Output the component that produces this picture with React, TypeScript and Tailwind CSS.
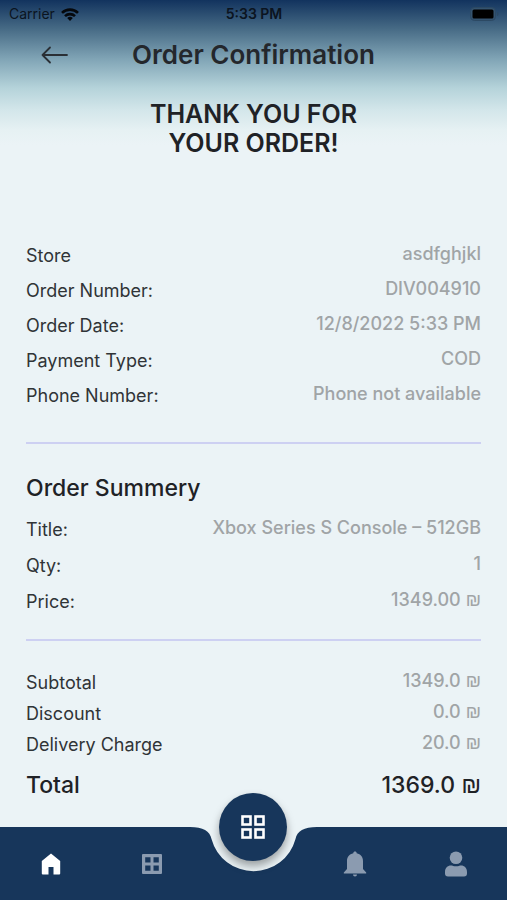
import React from "react";

type Item = { label: string; value: string; currency?: boolean };

const orderInfo: Item[] = [
  { label: "Store", value: "asdfghjkl" },
  { label: "Order Number:", value: "DIV004910" },
  { label: "Order Date:", value: "12/8/2022 5:33 PM" },
  { label: "Payment Type:", value: "COD" },
  { label: "Phone Number:", value: "Phone not available" },
];

const summary: Item[] = [
  { label: "Title:", value: "Xbox Series S Console – 512GB" },
  { label: "Qty:", value: "1" },
  { label: "Price:", value: "1349.00", currency: true },
];

const charges: Item[] = [
  { label: "Subtotal", value: "1349.0", currency: true },
  { label: "Discount", value: "0.0", currency: true },
  { label: "Delivery Charge", value: "20.0", currency: true },
];

function Shekel() {
  return <span className="font-['Liberation_Sans',sans-serif]"> ₪</span>;
}

function Rows({ items, className }: { items: Item[]; className: string }) {
  return (
    <dl className={`flex flex-col ${className}`}>
      {items.map((item) => (
        <div key={item.label} className="flex items-start justify-between text-lg">
          <dt className="leading-6 text-[#303437]">{item.label}</dt>
          <dd className="text-right font-medium leading-[19px] text-[#a0a4a6]">
            {item.value}
            {item.currency && <Shekel />}
          </dd>
        </div>
      ))}
    </dl>
  );
}

function StatusBar() {
  return (
    <div className="grid h-7 grid-cols-3 items-center pl-[9px] pr-2 text-sm text-[#0b1420]">
      <div className="flex items-center gap-1.5">
        <span>Carrier</span>
        <svg width="18" height="13" viewBox="0 0 18 13" fill="none" stroke="#05080c" strokeWidth="2.6">
          <path d="M1 4.9a11.4 11.4 0 0 1 16 0" />
          <path d="M4 8.1a7.2 7.2 0 0 1 10 0" />
          <path d="M9 13 6.2 10.1a4 4 0 0 1 5.6 0Z" fill="#05080c" stroke="none" />
        </svg>
      </div>
      <span className="text-center font-semibold">5:33 PM</span>
      <svg className="justify-self-end" width="29" height="14" viewBox="0 0 29 14">
        <rect x="0.5" y="0.5" width="25" height="13" rx="4" fill="#34536f" stroke="#2c4963" />
        <rect x="2.5" y="2.5" width="21" height="9" rx="1.5" fill="#000" />
        <path d="M27 5v4c2-.6 2-3.4 0-4Z" fill="#2c4963" />
      </svg>
    </div>
  );
}

function BottomNav() {
  return (
    <nav className="relative h-[73px]">
      {/* bar background, with the notch in the middle */}
      <div className="absolute inset-0 flex">
        <div className="flex-1 bg-[#17365b]" />
        <svg width="127" height="73" viewBox="0 0 127 73" fill="#17365b">
          <path d="M0 0C13 0 20 4 21.5 12A43.5 43.5 0 0 0 105.500 12C107 4 114 0 127 0V73H0Z" />
        </svg>
        <div className="flex-1 bg-[#17365b]" />
      </div>

      <div className="relative grid h-full grid-cols-5 justify-items-center text-[#8b9bb0]">
        <button aria-label="Home" className="text-white">
          <svg width="20" height="22" viewBox="0 0 20 22" fill="currentColor">
            <path d="M10 0.5 19.2 8V20.500a1 1 0 0 1-1 1H12.500V14H7.500V21.500H1.800a1 1 0 0 1-1-1V8Z" />
          </svg>
        </button>
        <button aria-label="Categories">
          <svg width="20" height="20" viewBox="0 0 20 20" fill="currentColor">
            <path
              fillRule="evenodd"
              d="M1 0H19a1 1 0 0 1 1 1V19a1 1 0 0 1-1 1H1a1 1 0 0 1-1-1V1a1 1 0 0 1 1-1ZM3.200 3.200V8.500H8.500V3.200ZM11.500 3.200V8.500H16.800V3.200ZM3.200 11.500V16.800H8.500V11.500ZM11.500 11.500V16.800H16.800V11.500Z"
            />
          </svg>
        </button>
        <button
          aria-label="Menu"
          className="-mt-[34px] flex size-[68px] items-center justify-center rounded-full bg-[#17365b] shadow-[0_5px_8px_rgba(0,0,0,0.35)]"
        >
          <svg width="24" height="24" viewBox="0 0 24 24" fill="none" stroke="#fff" strokeWidth="2.6">
            <rect x="1.5" y="1.5" width="8" height="8" />
            <rect x="14.5" y="1.5" width="8" height="8" />
            <rect x="1.5" y="14.5" width="8" height="8" />
            <rect x="14.5" y="14.5" width="8" height="8" />
          </svg>
        </button>
        <button aria-label="Notifications">
          <svg width="24" height="26" viewBox="0 0 24 26" fill="currentColor">
            <path d="M12 .5c1 0 1.700.7 1.700 1.700C17.700 3 20 6 20 10v8l3.200 3.500v1H.8v-1L4 18v-8c0-4 2.300-7 6.300-7.800C10.300 1.200 11 .5 12 .5ZM10 23.500h4a2 2 0 0 1-4 0Z" />
          </svg>
        </button>
        <button aria-label="Profile">
          <svg width="22" height="26" viewBox="0 0 22 26" fill="currentColor">
            <circle cx="11" cy="6.7" r="6.3" />
            <path d="M0 21c0-4 2.500-6.500 6-6.500 1.500 0 2.500.8 5 .8s3.500-.8 5-.8c3.500 0 6 2.500 6 6.500v1.500a3 3 0 0 1-3 3H3a3 3 0 0 1-3-3Z" />
          </svg>
        </button>
      </div>
    </nav>
  );
}

function App() {
  return (
    <div className="flex min-h-screen flex-col bg-[#ebf3f6] bg-[linear-gradient(180deg,#12335e_0px,#456984_28px,#82a6b7_60px,#b5d3da_88px,#d3e6ea_110px,#e6f1f3_130px,#ebf3f6_145px)] bg-no-repeat font-['Inter',sans-serif] text-[#1f2226]">
      <StatusBar />

      <header className="grid h-[54px] grid-cols-[1fr_auto_1fr] items-center px-[41px]">
        <button aria-label="Back" className="justify-self-start">
          <svg width="27" height="18" viewBox="0 0 27 18" fill="none" stroke="#2a2f35" strokeWidth="1.8" strokeLinecap="round" strokeLinejoin="round">
            <path d="M26 9H1.5M9 1.5 1.5 9 9 16.5" />
          </svg>
        </button>
        <h1 className="text-[26px] font-semibold leading-8 text-[#24272c]">Order Confirmation</h1>
      </header>

      <main className="flex flex-1 flex-col px-[26px]">
        <h2 className="mt-[18px] text-center text-[25px] font-semibold leading-[29px]">
          THANK YOU FOR
          <br />
          YOUR ORDER!
        </h2>

        <Rows items={orderInfo} className="mt-[86px] gap-[11px]" />
        <hr className="mt-[34px] border-t-2 border-[#cdd0f2]" />

        <h3 className="mt-7 text-[23px] font-medium leading-8">Order Summery</h3>
        <Rows items={summary} className="mt-3.5 gap-3" />
        <hr className="mt-[25px] border-t-2 border-[#cdd0f2]" />

        <Rows items={charges} className="mt-[30px] gap-[7px]" />
        <div className="mt-3 mb-6 flex justify-between text-[23px] font-medium leading-8">
          <span>Total</span>
          <span>
            1369.0
            <Shekel />
          </span>
        </div>
      </main>

      <BottomNav />
    </div>
  );
}

export default App;
